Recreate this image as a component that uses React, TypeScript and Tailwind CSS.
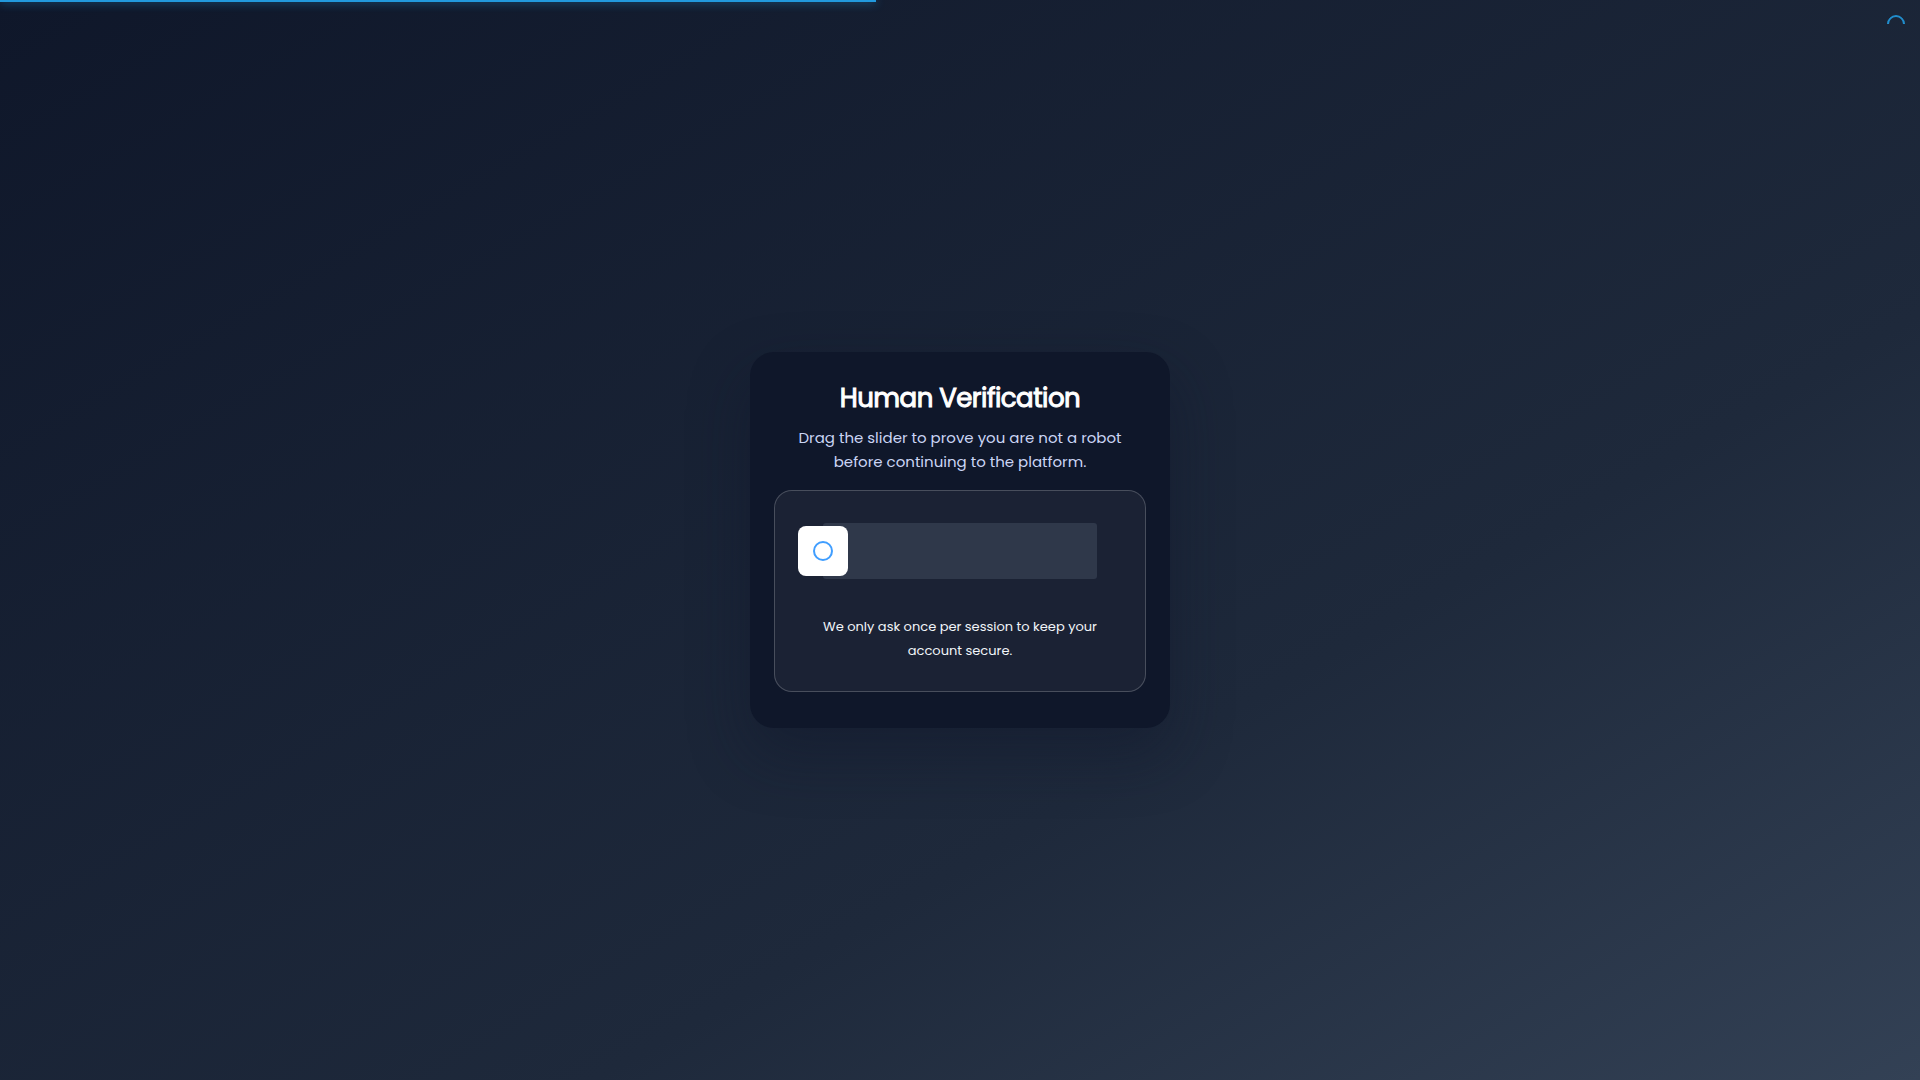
import { useState } from "react"

function LoadingBar() {
  return (
    <div role="status" aria-label="Loading">
      <div className="absolute top-0 left-0 h-[2px] w-[45.6%] bg-[#2299dd] shadow-[0_0_10px_#2299dd]" />
      <div className="absolute top-[15px] right-[15px] size-[18px] rotate-45 rounded-full border-2 border-transparent border-t-[#2299dd] border-l-[#2299dd] opacity-90" />
    </div>
  )
}

function SliderCaptcha() {
  const [value, setValue] = useState(0)

  return (
    <div className="rounded-[18px] border border-white/20 bg-white/5 px-[23px] pt-8 pb-7">
      <div className="grid items-center">
        <div className="col-start-1 row-start-1 mx-[25px] h-14 rounded-[3px] bg-[#2f384a]" />
        <input
          type="range"
          min={0}
          max={100}
          value={value}
          onChange={(e) => setValue(Number(e.target.value))}
          aria-label="Drag the slider to verify"
          className="col-start-1 row-start-1 m-0 h-[50px] w-full cursor-pointer appearance-none bg-transparent [&::-webkit-slider-thumb]:size-[50px] [&::-webkit-slider-thumb]:appearance-none [&::-webkit-slider-thumb]:rounded-lg [&::-webkit-slider-thumb]:bg-white"
        />
        <div
          className="pointer-events-none col-start-1 row-start-1 mr-[50px]"
          style={{ paddingLeft: `${value}%` }}
        >
          <div className="flex w-[50px] justify-center">
            <div className="size-5 rounded-full border-2 border-[#409eff]" />
          </div>
        </div>
      </div>
      <p className="mt-9 text-center text-[13px] leading-6 text-[#f1f5f9]">
        We only ask once per session to keep your account secure.
      </p>
    </div>
  )
}

function App() {
  return (
    <main className="relative flex min-h-screen items-center justify-center overflow-hidden bg-linear-[150deg,#0f172a,#1e293b_65%,#334155] p-6 font-[Poppins,Inter,sans-serif]">
      <LoadingBar />
      <section className="w-full max-w-[420px] rounded-3xl bg-[#0f172a] px-6 pt-6 pb-9 shadow-[0_25px_60px_rgba(15,23,42,0.45)]">
        <h1 className="text-center text-[26px] leading-11 font-normal tracking-[-0.02em] text-white [-webkit-text-stroke:1px_white]">Human Verification</h1>
        <p className="mt-[6px] mb-4 px-4 text-center text-[15px] leading-6 text-[#cbd5f5]">
          Drag the slider to prove you are not a robot before continuing to the platform.
        </p>
        <SliderCaptcha />
      </section>
    </main>
  )
}

export default App
